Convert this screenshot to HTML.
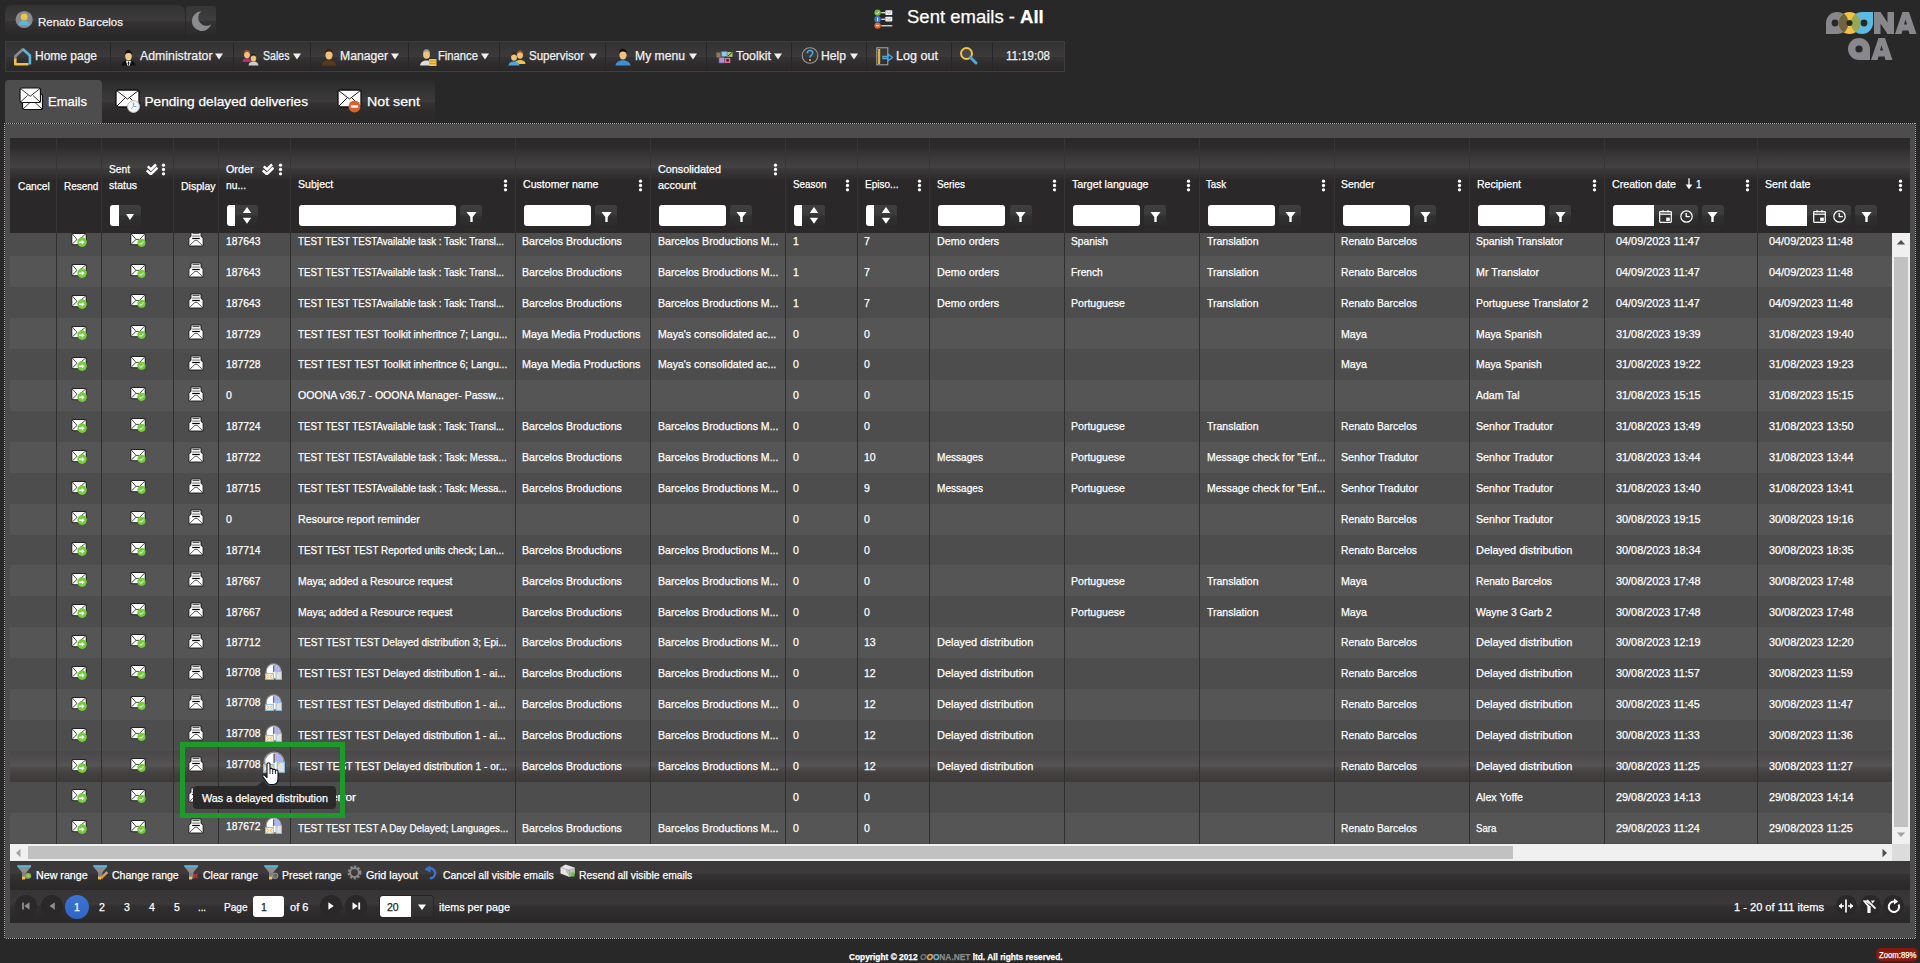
<!DOCTYPE html>
<html><head><meta charset="utf-8"><title>Sent emails</title>
<style>
*{box-sizing:border-box;margin:0;padding:0}
html,body{width:1920px;height:963px;overflow:hidden;background:#282828;font-family:"Liberation Sans",sans-serif;color:#fff;position:relative}
.a{position:absolute}
.t{position:absolute;white-space:nowrap;line-height:1;transform-origin:0 0;-webkit-text-stroke:0.25px currentColor}
svg{display:block;overflow:visible}
</style></head><body>
<svg width="0" height="0" style="position:absolute">
<defs>
<symbol id="kebab" viewBox="0 0 5 13"><circle cx="2.5" cy="2.2" r="1.65" fill="#fff"/><circle cx="2.5" cy="6.5" r="1.65" fill="#fff"/><circle cx="2.5" cy="10.8" r="1.65" fill="#fff"/></symbol>
<symbol id="funnel" viewBox="0 0 12 13"><path d="M0.5 1h11L7.3 6.5V12H4.7V6.5z" fill="#fff"/></symbol>
<symbol id="dchk" viewBox="0 0 12 12"><path d="M1.8 3.4l3.2 3.1 5-5" stroke="#fff" stroke-width="2.5" fill="none"/><path d="M0.8 7.4l4 3.7 6.6-6.4" stroke="#fff" stroke-width="2.6" fill="none"/></symbol>
<symbol id="envres" viewBox="0 0 16 14"><rect x="0.75" y="0.5" width="14.5" height="11.2" rx="1.5" fill="#fff" stroke="#222" stroke-width="1.1"/><path d="M1.3 1L6 6.4M14.5 1.2L9.2 5.6M6 6.4L1.5 10.8" stroke="#333" stroke-width="0.9" fill="none"/><circle cx="11.1" cy="9.1" r="4.8" fill="#74cd3a"/><path d="M8 9.3h4.2" stroke="#fff" stroke-width="1.6"/><path d="M10.8 6.9l2.8 2.4-2.8 2.4z" fill="#fff"/></symbol>
<symbol id="envok" viewBox="0 0 16 14"><rect x="0.75" y="0.5" width="14.5" height="11.2" rx="1.5" fill="#fff" stroke="#222" stroke-width="1.1"/><path d="M1.3 1L6 6.4h3.6L14.5 1.2M6 6.4L1.5 10.8" stroke="#333" stroke-width="0.9" fill="none"/><circle cx="11.5" cy="9.8" r="4.1" fill="#74cd3a"/><path d="M9.5 10.2l1.5 1.1 2.6-2.6" stroke="#dcdcdc" stroke-width="1.2" fill="none"/></symbol>
<symbol id="display" viewBox="0 0 16 16"><path d="M0.9 6.8L3 5.5V1h10v4.5l2.1 1.3V15H0.9z" fill="#fff" stroke="#1a1a1a" stroke-width="0.9"/><path d="M4.5 2.6h7" stroke="#333" stroke-width="0.9"/><path d="M4.2 5.1h7.6" stroke="#888" stroke-width="1.3"/><path d="M4.2 7.5h7.6" stroke="#000" stroke-width="1.2"/><path d="M1.2 14.8L7 9.3h2l5.8 5.5" stroke="#444" stroke-width="0.9" fill="none"/></symbol>
<symbol id="delay" viewBox="0 0 17 17"><circle cx="8.6" cy="8.4" r="8.1" fill="#909090"/><circle cx="8.6" cy="8.4" r="6.8" fill="#fff"/><path d="M8.6 1.6A6.8 6.8 0 0 1 15.4 8.4H8.6z" fill="#b0b2f2"/><path d="M8.6 2.2v7" stroke="#6a6a6a" stroke-width="1.2"/><rect x="11" y="8.6" width="5.6" height="7.8" fill="#e2e2e2" stroke="#86c0e0" stroke-width="0.9"/><circle cx="12.2" cy="9.8" r="0.7" fill="#f2c045"/><rect x="0.5" y="10.4" width="7.9" height="6" fill="#eceef2" stroke="#86c0e0" stroke-width="0.9"/><path d="M1.3 11.2l2.5 2.3M7.6 11.2l-2.5 2.3M1.3 15.8l2.5-2.3M7.6 15.8l-2.5-2.3" stroke="#f0b830" stroke-width="0.9" fill="none"/></symbol>
<symbol id="drop" viewBox="0 0 10 8"><path d="M1 1h8L5 7z" fill="#fff"/></symbol>
<symbol id="spin" viewBox="0 0 10 20"><path d="M0.8 8h8.4L5 2z M0.8 12.7h8.4L5 18.7z" fill="#fff"/></symbol>
<symbol id="cal" viewBox="0 0 13 13"><rect x="0.7" y="1.6" width="11.6" height="10.7" rx="0.5" fill="none" stroke="#fff" stroke-width="1.2"/><path d="M0.7 4.2h11.6" stroke="#fff" stroke-width="1.2"/><circle cx="4" cy="1.3" r="1.1" fill="#fff"/><circle cx="9" cy="1.3" r="1.1" fill="#fff"/><rect x="7.2" y="7.6" width="3.6" height="3.3" fill="#fff"/></symbol>
<symbol id="clock" viewBox="0 0 13 13"><circle cx="6.5" cy="6.5" r="5.7" fill="none" stroke="#fff" stroke-width="1.2"/><path d="M6.2 3v3.6h3.6" stroke="#fff" stroke-width="1.3" fill="none"/></symbol>
<symbol id="tfun" viewBox="0 0 16 15"><rect x="0.3" y="0.2" width="13.8" height="1.8" fill="#5ab8e2"/><path d="M0.6 2h13.2L9.3 7.5V13.5H5.1V7.5z" fill="#8e8e8e"/><path d="M5.1 7.5h4.2V13.5H5.1z" fill="#808080"/><rect x="5" y="11.6" width="3" height="2.9" fill="#f2c045"/></symbol>
<symbol id="pdrop" viewBox="0 0 10 10"><path d="M1 2.5h8L5 8z" fill="#fff"/></symbol>
</defs></svg>

<div class="a" style="left:5px;top:5px;width:180px;height:31px;border-radius:7px;background:linear-gradient(#333232 0%,#3d3b3b 50%,#353333 52%,#2f2d2d 75%,#2a2828 100%)"></div>
<svg class="a" style="left:14.5px;top:10px" width="19" height="19" viewBox="0 0 19 19"><circle cx="9.2" cy="9.5" r="8.6" fill="#8a8a8e"/><circle cx="9.2" cy="7" r="3.5" fill="#f4c040"/><path d="M3.6 15.2C4 12.2 6.2 10.4 9.2 10.4S14.4 12.2 14.8 15.2z" fill="#58b8de"/></svg>
<div class="a" style="left:186px;top:6px;width:30px;height:30px;border-radius:3px;background:linear-gradient(#363636 0%,#3d3d3d 48%,#343434 51%,#2e2e2e 75%,#2a2a2a 100%)"></div>
<svg class="a" style="left:190px;top:10px" width="22" height="22" viewBox="0 0 22 22"><path d="M11.5 1.2A9.9 9.9 0 1 0 21.2 14.2 6.9 6.9 0 0 1 11.5 1.2z" fill="#8c8c90"/></svg>

<div class="t" style="left:38.00px;top:16.97px;font-size:11.5px;color:#f0f0f0;">Renato Barcelos</div>
<svg class="a" style="left:874px;top:8.5px" width="21" height="21" viewBox="0 0 21 21">
<circle cx="3.6" cy="3.6" r="3.2" fill="#72b83a"/><path d="M2.1 3.7l1.1 1.1 2-2.1" stroke="#fff" stroke-width="0.9" fill="none"/>
<circle cx="3.6" cy="10.2" r="3.2" fill="#3f79d1"/><rect x="3.2" y="8.5" width="0.9" height="3.6" fill="#fff"/>
<circle cx="3.6" cy="16.6" r="3.2" fill="#dc6a34"/><rect x="2" y="16.1" width="3.2" height="1" fill="#fff"/>
<rect x="7.3" y="3" width="3.8" height="1.3" fill="#ddd"/><rect x="11.3" y="1.2" width="7" height="4.8" rx="0.8" fill="#eee"/><path d="M12.5 2.5l2.5 2 2.3-2" stroke="#888" stroke-width="0.6" fill="none"/>
<rect x="7.3" y="9.6" width="3.8" height="1.3" fill="#ddd"/><rect x="11.3" y="7.8" width="7" height="4.8" rx="0.8" fill="#eee"/><path d="M12.5 9.1l2.5 2 2.3-2" stroke="#888" stroke-width="0.6" fill="none"/>
<rect x="7.3" y="16.1" width="11" height="1.3" fill="#ddd"/></svg>

<div class="t" style="left:907.00px;top:7.84px;font-size:18.5px;color:#fff;">Sent emails - <b>All</b></div>
<svg class="a" style="left:1824px;top:10px" width="94" height="52" viewBox="0 0 94 52">
<path d="M2 24 V13 A11 11 0 0 1 13 2 A11 11 0 0 1 24 13 A11 11 0 0 1 13 24z" fill="#88888c"/>
<path d="M14.5 13 A11 11 0 0 1 25.5 2 A11 11 0 0 1 36.5 13 A11 11 0 0 1 25.5 24 A11 11 0 0 1 14.5 13z" fill="#f3c244"/>
<path d="M14.5 13 A11 11 0 0 1 20 3.5 A11 11 0 0 1 24 13 A11 11 0 0 1 20 22.5 A11 11 0 0 1 14.5 13z" fill="#6e6540"/>
<path d="M27 13 A11 11 0 0 1 38 2 H49 V13 A11 11 0 0 1 38 24 A11 11 0 0 1 27 13z" fill="#5bbbe2"/>
<path d="M27 13 A11 11 0 0 1 31.8 3.9 A11 11 0 0 1 36.5 13 A11 11 0 0 1 31.8 22.1 A11 11 0 0 1 27 13z" fill="#98a850"/>
<circle cx="11" cy="13" r="3.4" fill="#282828"/><circle cx="25.5" cy="13" r="3" fill="#282828"/><circle cx="40" cy="13" r="3.4" fill="#282828"/>
<path d="M50 24V2h6.5l7 10.5V2h6.5v22h-6.5l-7-10.5V24z" fill="#88888c"/>
<path d="M71 24l7.5-22h6.5l7.5 22h-7l-1-3.5h-6l-1 3.5zM80 14.5h3l-1.5-5z" fill="#88888c" fill-rule="evenodd"/>
<path d="M24 39 A11 11 0 0 1 35 28 A11 11 0 0 1 46 39 V50 H35 A11 11 0 0 1 24 39z" fill="#88888c"/>
<circle cx="35" cy="39" r="3.6" fill="#282828"/>
<path d="M47 50l7.5-22h6.5l7.5 22h-7l-1-3.5h-6l-1 3.5zM56 40.5h3l-1.5-5z" fill="#88888c" fill-rule="evenodd"/>
</svg>

<div class="a" style="left:5px;top:41px;width:1060px;height:31px;border:1px solid #3e3e3e;background:linear-gradient(#333232 0%,#3c3a3a 50%,#353333 53%,#2e2c2c 75%,#292727 100%)"></div>
<div class="a" style="left:110px;top:42px;width:1px;height:29px;background:#262626"></div>
<div class="a" style="left:233px;top:42px;width:1px;height:29px;background:#262626"></div>
<div class="a" style="left:310px;top:42px;width:1px;height:29px;background:#262626"></div>
<div class="a" style="left:408px;top:42px;width:1px;height:29px;background:#262626"></div>
<div class="a" style="left:499px;top:42px;width:1px;height:29px;background:#262626"></div>
<div class="a" style="left:605px;top:42px;width:1px;height:29px;background:#262626"></div>
<div class="a" style="left:706px;top:42px;width:1px;height:29px;background:#262626"></div>
<div class="a" style="left:791px;top:42px;width:1px;height:29px;background:#262626"></div>
<div class="a" style="left:866px;top:42px;width:1px;height:29px;background:#262626"></div>
<div class="a" style="left:951px;top:42px;width:1px;height:29px;background:#262626"></div>
<div class="a" style="left:992px;top:42px;width:1px;height:29px;background:#262626"></div>
<div class="t" style="left:35.00px;top:49.84px;font-size:12px;color:#f0f0f0;">Home page</div>
<div class="t" style="left:140.00px;top:49.84px;font-size:12px;color:#f0f0f0;transform:scaleX(1.0256);">Administrator</div>
<svg class="a" style="left:215px;top:52.8px" width="8" height="7" viewBox="0 0 8 7"><path d="M0 0.5h8L4 6.5z" fill="#f0f0f0"/></svg>
<div class="t" style="left:262.50px;top:49.84px;font-size:12px;color:#f0f0f0;transform:scaleX(0.8824);">Sales</div>
<svg class="a" style="left:293px;top:52.8px" width="8" height="7" viewBox="0 0 8 7"><path d="M0 0.5h8L4 6.5z" fill="#f0f0f0"/></svg>
<div class="t" style="left:340.00px;top:49.84px;font-size:12px;color:#f0f0f0;transform:scaleX(1.0132);">Manager</div>
<svg class="a" style="left:391px;top:52.8px" width="8" height="7" viewBox="0 0 8 7"><path d="M0 0.5h8L4 6.5z" fill="#f0f0f0"/></svg>
<div class="t" style="left:438.00px;top:49.84px;font-size:12px;color:#f0f0f0;transform:scaleX(0.9367);">Finance</div>
<svg class="a" style="left:481px;top:52.8px" width="8" height="7" viewBox="0 0 8 7"><path d="M0 0.5h8L4 6.5z" fill="#f0f0f0"/></svg>
<div class="t" style="left:529.00px;top:49.84px;font-size:12px;color:#f0f0f0;transform:scaleX(0.9589);">Supervisor</div>
<svg class="a" style="left:589px;top:52.8px" width="8" height="7" viewBox="0 0 8 7"><path d="M0 0.5h8L4 6.5z" fill="#f0f0f0"/></svg>
<div class="t" style="left:635.00px;top:49.84px;font-size:12px;color:#f0f0f0;transform:scaleX(1.0130);">My menu</div>
<svg class="a" style="left:689px;top:52.8px" width="8" height="7" viewBox="0 0 8 7"><path d="M0 0.5h8L4 6.5z" fill="#f0f0f0"/></svg>
<div class="t" style="left:736.00px;top:49.84px;font-size:12px;color:#f0f0f0;transform:scaleX(1.0289);">Toolkit</div>
<svg class="a" style="left:774px;top:52.8px" width="8" height="7" viewBox="0 0 8 7"><path d="M0 0.5h8L4 6.5z" fill="#f0f0f0"/></svg>
<div class="t" style="left:821.00px;top:49.84px;font-size:12px;color:#f0f0f0;transform:scaleX(1.0127);">Help</div>
<svg class="a" style="left:850px;top:52.8px" width="8" height="7" viewBox="0 0 8 7"><path d="M0 0.5h8L4 6.5z" fill="#f0f0f0"/></svg>
<div class="t" style="left:896.00px;top:49.84px;font-size:12px;color:#f0f0f0;transform:scaleX(1.0488);">Log out</div>
<div class="t" style="left:1006.00px;top:49.84px;font-size:12px;color:#f0f0f0;transform:scaleX(0.9601);">11:19:08</div>
<svg class="a" style="left:14px;top:48px" width="18" height="18" viewBox="0 0 18 18"><path d="M1.3 11V8.2L9 1.3" fill="none" stroke="#8a8a8e" stroke-width="2.6" stroke-linejoin="round" stroke-linecap="round"/><path d="M9 1.3L15.9 7.5V16.6" fill="none" stroke="#58b8e2" stroke-width="2.6" stroke-linejoin="round"/><path d="M1.3 10.8V16.2H14.5" fill="none" stroke="#f4c242" stroke-width="2.6" stroke-linejoin="round"/></svg>

<svg class="a" style="left:120.5px;top:48.5px" width="15" height="17" viewBox="0 0 15 17"><path d="M0.3 16.5C0.8 13.5 2.5 12.3 5 11.8h5c2.5 0.5 4.2 1.7 4.7 4.7z" fill="#111"/><path d="M5 11.8h5L8.7 16.5H6.3z" fill="#fff"/><path d="M7 12.5h1l0.4 2.5-0.9 1.2-0.9-1.2z" fill="#111"/><ellipse cx="7.5" cy="7" rx="3.3" ry="4.3" fill="#f3c98a"/><path d="M4 6.3C3.8 2.5 5.5 1 7.5 1s3.7 1.5 3.5 5.3C10.5 4.5 9.2 3.8 7.5 3.9 5.8 3.8 4.5 4.5 4 6.3z" fill="#111"/></svg>
<svg class="a" style="left:242px;top:48px" width="18" height="18" viewBox="0 0 18 18"><path d="M0.5 14c0.3-3 2-4 4.5-4s4.2 1 4.5 4z" fill="#b0336a"/><ellipse cx="5" cy="6.5" rx="3" ry="3.7" fill="#f0c27a"/><path d="M1.8 7C1.5 3 3 2 5 2s3.5 1 3.2 5C7.5 4.5 6 4 5 4S2.5 4.5 1.8 7z" fill="#a0522d"/><path d="M6.5 17.5c0.3-3 2.2-4 5-4s4.7 1 5 4z" fill="#ccc"/><ellipse cx="11.5" cy="10" rx="2.8" ry="3.5" fill="#f0c27a"/><path d="M8.7 9.5C8.7 7 10 6 11.5 6s2.8 1 2.8 3.5c-0.7-1.5-1.7-2-2.8-2s-2.1 0.5-2.8 2z" fill="#111"/></svg>
<svg class="a" style="left:321px;top:47px" width="16" height="19" viewBox="0 0 16 19"><path d="M0.5 18.5c0.5-3.5 3-5 7.5-5s7 1.5 7.5 5z" fill="#5a3a1a"/><path d="M6 13.5h4l-2 5z" fill="#5a3a1a"/><ellipse cx="8" cy="8" rx="3.6" ry="4.6" fill="#f0c27a"/><path d="M4.3 7C4.2 3 6 1.8 8 1.8s3.8 1.2 3.7 5.2C11 5 9.5 4.3 8 4.5 6.5 4.3 5 5 4.3 7z" fill="#3a2410"/></svg>
<svg class="a" style="left:419px;top:47px" width="18" height="20" viewBox="0 0 18 20"><path d="M1 18.5c0.5-3.5 3-5 6.5-5s6 1.5 6.5 5z" fill="#ddd"/><ellipse cx="7.5" cy="7.5" rx="3.4" ry="4.3" fill="#f0c27a"/><path d="M4 7C4 3.5 5.5 2.3 7.5 2.3S11 3.5 11 7C10.3 5 9 4.5 7.5 4.5S4.7 5 4 7z" fill="#999"/><rect x="10" y="12" width="7.5" height="7" fill="#f2c045"/><path d="M10 14h7.5M10 16.5h7.5" stroke="#c09020" stroke-width="0.7"/></svg>
<svg class="a" style="left:508px;top:48px" width="19" height="18" viewBox="0 0 19 18"><path d="M6.5 16c0.3-3 2.2-4 5.5-4s5.2 1 5.5 4z" fill="#f2c045"/><ellipse cx="12" cy="7" rx="3" ry="3.7" fill="#f0c27a"/><path d="M9 6.5C9 3.5 10.5 2.3 12 2.3S15 3.5 15 6.5c-0.7-1.5-2-2-3-2s-2.3 0.5-3 2z" fill="#a0522d"/><path d="M0.5 17.5c0.3-3 2.2-4 5.5-4s5.2 1 5.5 4z" fill="#4aa8de"/><ellipse cx="6" cy="9" rx="3" ry="3.7" fill="#f0c27a"/><path d="M3 8.5C3 5.5 4.5 4.3 6 4.3S9 5.5 9 8.5c-0.7-1.5-2-2-3-2s-2.3 0.5-3 2z" fill="#3a2410"/></svg>
<svg class="a" style="left:615px;top:47px" width="16" height="19" viewBox="0 0 16 19"><path d="M0.5 18.5c0.5-3.5 3-5 7.5-5s7 1.5 7.5 5z" fill="#3c8fd4"/><path d="M6 13.5h4l-2 5z" fill="#3c8fd4"/><ellipse cx="8" cy="8" rx="3.6" ry="4.6" fill="#f0c27a"/><path d="M4.3 7C4.2 3 6 1.8 8 1.8s3.8 1.2 3.7 5.2C11 5 9.5 4.3 8 4.5 6.5 4.3 5 5 4.3 7z" fill="#111"/></svg>
<svg class="a" style="left:715.5px;top:50.5px" width="17" height="13" viewBox="0 0 17 13"><rect x="0.3" y="1.5" width="4.5" height="5" fill="#a07850" stroke="#555" stroke-width="0.5"/><rect x="5.5" y="0.5" width="5.5" height="5" fill="#8cc8e8" stroke="#4a7a9a" stroke-width="0.6"/><rect x="11.3" y="1" width="5.2" height="4.8" fill="#a8c878"/><path d="M12 5l4-3.5" stroke="#333" stroke-width="1"/><rect x="3" y="6.5" width="5.5" height="5.5" fill="#b090d0" stroke="#6a5a8a" stroke-width="0.6"/><rect x="8.8" y="7" width="5.5" height="5" fill="#e07090"/><rect x="10.3" y="8.3" width="2.5" height="2.2" fill="#222"/></svg>
<svg class="a" style="left:801px;top:46px" width="18" height="19" viewBox="0 0 18 19"><circle cx="9" cy="9.5" r="7.8" fill="none" stroke="#9a9a9a" stroke-width="1.1"/><path d="M6.3 7.2C6.3 5.5 7.5 4.5 9 4.5s2.7 1 2.7 2.5c0 2-2.7 2.3-2.7 4.5" fill="none" stroke="#4aa8de" stroke-width="1.6"/><circle cx="9" cy="14" r="1" fill="#f2c045"/></svg>
<svg class="a" style="left:876px;top:47px" width="18" height="19" viewBox="0 0 18 19"><rect x="0.8" y="0.8" width="11" height="17" fill="none" stroke="#aaa" stroke-width="1"/><rect x="2" y="2" width="2.2" height="15" fill="#e0b040"/><path d="M7 9.5h5V7l4.5 3.5-4.5 3.5v-2.5H7z" fill="none" stroke="#4aa8de" stroke-width="1.3"/></svg>
<svg class="a" style="left:959px;top:46px" width="19" height="19" viewBox="0 0 19 19"><circle cx="7.5" cy="7.5" r="5.5" fill="#4a4a4a" stroke="#f2c045" stroke-width="2"/><path d="M11.5 11.5l5.5 5.5" stroke="#4aa8de" stroke-width="3" stroke-linecap="round"/></svg>
<div class="a" style="left:5px;top:80px;width:430px;height:43px;border-radius:0 4px 0 0;background:linear-gradient(#2b2b2b 0%,#333232 20%,#3c3a3a 50%,#353333 52%,#2d2b2b 72%,#2a2828 100%)"></div>
<div class="a" style="left:5px;top:80px;width:97px;height:44px;border-radius:4px 4px 0 0;background:#4d4d4d"></div>
<svg class="a" style="left:19px;top:87px" width="26" height="24" viewBox="0 0 26 24"><rect x="3.5" y="7" width="20" height="15.5" rx="2" fill="#fff" stroke="#111" stroke-width="1.2"/><path d="M4 22L11 15.5M23 22L16 15.5" stroke="#222" stroke-width="0.9" fill="none"/><rect x="1" y="1" width="20.5" height="14.5" rx="2" fill="#fff" stroke="#111" stroke-width="1.2"/><path d="M1.5 1.5L11.2 9.3 21 1.5M1.5 15L8.5 8.5M21 15L14 8.5" stroke="#222" stroke-width="0.9" fill="none"/></svg>
<svg class="a" style="left:115px;top:89px" width="27" height="24" viewBox="0 0 27 24"><rect x="1" y="1" width="23" height="17" rx="2" fill="#fff" stroke="#111" stroke-width="1.3"/><path d="M1.5 1.5L12.5 10 23.5 1.5M1.5 17.5L10 9M23.5 17.5L15 9" stroke="#222" stroke-width="1" fill="none"/><circle cx="18.5" cy="17.5" r="6" fill="#f4f4f4" stroke="#bbb" stroke-width="1"/><path d="M18.5 13.5v4h3" stroke="#6ab0e0" stroke-width="1.2" fill="none"/><path d="M18.5 17.5l-2.5 2.5" stroke="#f2c045" stroke-width="1"/></svg>
<svg class="a" style="left:337px;top:89px" width="26" height="24" viewBox="0 0 26 24"><rect x="1" y="1" width="23" height="17" rx="2" fill="#fff" stroke="#111" stroke-width="1.3"/><path d="M1.5 1.5L12.5 10 23.5 1.5M1.5 17.5L10 9M23.5 17.5L15 9" stroke="#222" stroke-width="1" fill="none"/><circle cx="17.5" cy="17.5" r="6" fill="#d9602e"/><rect x="13.8" y="16.3" width="7.4" height="2.4" fill="#fff"/></svg>

<div class="t" style="left:48.00px;top:95.27px;font-size:13.5px;color:#fff;transform:scaleX(0.9626);">Emails</div>
<div class="t" style="left:144.40px;top:95.10px;font-size:13.7px;color:#fff;">Pending delayed deliveries</div>
<div class="t" style="left:366.60px;top:95.10px;font-size:13.7px;color:#fff;transform:scaleX(1.0395);">Not sent</div>
<div class="a" style="left:4px;top:123px;width:1912px;height:816px;background:#4d4d4d"></div>
<div class="a" style="left:4px;top:123px;width:1912px;height:1px;background:repeating-linear-gradient(90deg,#a8a8a8 0 1px,#262626 1px 2px)"></div>
<div class="a" style="left:4px;top:938px;width:1912px;height:1px;background:repeating-linear-gradient(90deg,#a8a8a8 0 1px,#262626 1px 2px)"></div>
<div class="a" style="left:4px;top:123px;width:1px;height:816px;background:repeating-linear-gradient(180deg,#a8a8a8 0 1px,#262626 1px 2px)"></div>
<div class="a" style="left:1915px;top:123px;width:1px;height:816px;background:repeating-linear-gradient(180deg,#a8a8a8 0 1px,#262626 1px 2px)"></div>
<div class="a" style="left:10px;top:138px;width:1899.7px;height:94.5px;background:#2a2828"></div>
<div class="a" style="left:10px;top:138px;width:1899.7px;height:30px;background:linear-gradient(#2a2828 0%,#2c2a2a 28%,#3b3939 65%,#444242 100%)"></div>
<div class="a" style="left:10px;top:168px;width:1899.7px;height:13px;background:linear-gradient(#3d3b3b,#2a2828)"></div>
<div class="a" style="left:56px;top:138px;width:1px;height:94.5px;background:#363434"></div>
<div class="a" style="left:101px;top:138px;width:1px;height:94.5px;background:#363434"></div>
<div class="a" style="left:173px;top:138px;width:1px;height:94.5px;background:#363434"></div>
<div class="a" style="left:218px;top:138px;width:1px;height:94.5px;background:#363434"></div>
<div class="a" style="left:290px;top:138px;width:1px;height:94.5px;background:#363434"></div>
<div class="a" style="left:515px;top:138px;width:1px;height:94.5px;background:#363434"></div>
<div class="a" style="left:650px;top:138px;width:1px;height:94.5px;background:#363434"></div>
<div class="a" style="left:785px;top:138px;width:1px;height:94.5px;background:#363434"></div>
<div class="a" style="left:857px;top:138px;width:1px;height:94.5px;background:#363434"></div>
<div class="a" style="left:929px;top:138px;width:1px;height:94.5px;background:#363434"></div>
<div class="a" style="left:1064px;top:138px;width:1px;height:94.5px;background:#363434"></div>
<div class="a" style="left:1199px;top:138px;width:1px;height:94.5px;background:#363434"></div>
<div class="a" style="left:1334px;top:138px;width:1px;height:94.5px;background:#363434"></div>
<div class="a" style="left:1469px;top:138px;width:1px;height:94.5px;background:#363434"></div>
<div class="a" style="left:1604px;top:138px;width:1px;height:94.5px;background:#363434"></div>
<div class="a" style="left:1757px;top:138px;width:1px;height:94.5px;background:#363434"></div>
<div class="t" style="left:17.50px;top:180.69px;font-size:11px;color:#fff;transform:scaleX(0.9285);">Cancel</div>
<div class="t" style="left:63.60px;top:180.69px;font-size:11px;color:#fff;transform:scaleX(0.9071);">Resend</div>
<div class="t" style="left:109.00px;top:163.79px;font-size:11px;color:#fff;transform:scaleX(0.9275);">Sent</div>
<div class="t" style="left:109.00px;top:179.69px;font-size:11px;color:#fff;transform:scaleX(0.9537);">status</div>
<div class="t" style="left:180.70px;top:180.69px;font-size:11px;color:#fff;transform:scaleX(0.9563);">Display</div>
<div class="t" style="left:225.70px;top:163.79px;font-size:11px;color:#fff;transform:scaleX(0.9778);">Order</div>
<div class="t" style="left:225.70px;top:179.69px;font-size:11px;color:#fff;transform:scaleX(0.9343);">nu...</div>
<div class="t" style="left:297.50px;top:178.69px;font-size:11px;color:#fff;transform:scaleX(0.9618);">Subject</div>
<div class="t" style="left:522.50px;top:178.69px;font-size:11px;color:#fff;transform:scaleX(0.9647);">Customer name</div>
<div class="t" style="left:657.50px;top:163.69px;font-size:11px;color:#fff;transform:scaleX(0.9810);">Consolidated</div>
<div class="t" style="left:657.50px;top:180.29px;font-size:11px;color:#fff;transform:scaleX(0.9862);">account</div>
<div class="t" style="left:792.50px;top:178.69px;font-size:11px;color:#fff;transform:scaleX(0.8978);">Season</div>
<div class="t" style="left:864.50px;top:178.69px;font-size:11px;color:#fff;transform:scaleX(0.9131);">Episo...</div>
<div class="t" style="left:936.50px;top:178.69px;font-size:11px;color:#fff;transform:scaleX(0.8978);">Series</div>
<div class="t" style="left:1071.50px;top:178.69px;font-size:11px;color:#fff;transform:scaleX(0.9695);">Target language</div>
<div class="t" style="left:1206.00px;top:178.69px;font-size:11px;color:#fff;transform:scaleX(0.8840);">Task</div>
<div class="t" style="left:1341.30px;top:178.69px;font-size:11px;color:#fff;transform:scaleX(0.9441);">Sender</div>
<div class="t" style="left:1476.50px;top:178.69px;font-size:11px;color:#fff;transform:scaleX(0.9595);">Recipient</div>
<div class="t" style="left:1611.50px;top:178.69px;font-size:11px;color:#fff;transform:scaleX(0.9690);">Creation date</div>
<div class="t" style="left:1764.50px;top:178.69px;font-size:11px;color:#fff;transform:scaleX(0.9662);">Sent date</div>
<svg class="a" style="left:1685px;top:177.5px" width="8" height="12" viewBox="0 0 8 12"><path d="M4 0.3v7" stroke="#fff" stroke-width="1.3"/><path d="M0.6 6.5h6.8L4 11.2z" fill="#fff"/></svg>
<div class="t" style="left:1696.00px;top:178.69px;font-size:11px;color:#fff;transform:scaleX(0.8980);">1</div>
<svg class="a" style="left:146px;top:163px" width="12" height="12"><use href="#dchk"/></svg>
<svg class="a" style="left:262px;top:163px" width="12" height="12"><use href="#dchk"/></svg>
<svg class="a" style="left:160.6px;top:162.9px" width="5" height="13"><use href="#kebab"/></svg>
<svg class="a" style="left:277.9px;top:162.9px" width="5" height="13"><use href="#kebab"/></svg>
<svg class="a" style="left:502.5px;top:179.0px" width="5" height="13"><use href="#kebab"/></svg>
<svg class="a" style="left:637.9px;top:179.0px" width="5" height="13"><use href="#kebab"/></svg>
<svg class="a" style="left:772.9px;top:162.9px" width="5" height="13"><use href="#kebab"/></svg>
<svg class="a" style="left:844.5px;top:179.0px" width="5" height="13"><use href="#kebab"/></svg>
<svg class="a" style="left:916.5px;top:179.0px" width="5" height="13"><use href="#kebab"/></svg>
<svg class="a" style="left:1051.5px;top:179.0px" width="5" height="13"><use href="#kebab"/></svg>
<svg class="a" style="left:1186.2px;top:179.0px" width="5" height="13"><use href="#kebab"/></svg>
<svg class="a" style="left:1321.2px;top:179.0px" width="5" height="13"><use href="#kebab"/></svg>
<svg class="a" style="left:1456.5px;top:179.0px" width="5" height="13"><use href="#kebab"/></svg>
<svg class="a" style="left:1591.5px;top:179.0px" width="5" height="13"><use href="#kebab"/></svg>
<svg class="a" style="left:1744.7px;top:179.0px" width="5" height="13"><use href="#kebab"/></svg>
<svg class="a" style="left:1897.8px;top:179.0px" width="5" height="13"><use href="#kebab"/></svg>
<div class="a" style="left:110px;top:205px;width:31.0px;height:21px;border-radius:3px;background:linear-gradient(#3f3f3f 0%,#3b3b3b 45%,#303030 55%,#2b2b2b 100%)"><svg style="position:absolute;left:15.3px;top:8px" width="10" height="8"><use href="#drop"/></svg></div>
<div class="a" style="left:110px;top:205px;width:9.0px;height:21px;border-radius:3px 0 0 3px;background:#fff"></div>
<div class="a" style="left:227px;top:205px;width:31.0px;height:21px;border-radius:3px;background:linear-gradient(#3f3f3f 0%,#3b3b3b 45%,#303030 55%,#2b2b2b 100%)"><svg style="position:absolute;left:14.8px;top:0px" width="10" height="20"><use href="#spin"/></svg></div>
<div class="a" style="left:227px;top:205px;width:8.0px;height:21px;border-radius:3px 0 0 3px;background:#fff"></div>
<div class="a" style="left:794px;top:205px;width:30.6px;height:21px;border-radius:3px;background:linear-gradient(#3f3f3f 0%,#3b3b3b 45%,#303030 55%,#2b2b2b 100%)"><svg style="position:absolute;left:14.8px;top:0px" width="10" height="20"><use href="#spin"/></svg></div>
<div class="a" style="left:794px;top:205px;width:8.0px;height:21px;border-radius:3px 0 0 3px;background:#fff"></div>
<div class="a" style="left:866px;top:205px;width:30.6px;height:21px;border-radius:3px;background:linear-gradient(#3f3f3f 0%,#3b3b3b 45%,#303030 55%,#2b2b2b 100%)"><svg style="position:absolute;left:14.8px;top:0px" width="10" height="20"><use href="#spin"/></svg></div>
<div class="a" style="left:866px;top:205px;width:8.0px;height:21px;border-radius:3px 0 0 3px;background:#fff"></div>
<div class="a" style="left:299px;top:205px;width:157.0px;height:21px;border-radius:3px;background:#fff"></div>
<div class="a" style="left:460px;top:205px;width:22.0px;height:21px;border-radius:3px;background:linear-gradient(#3f3f3f 0%,#3b3b3b 45%,#303030 55%,#2b2b2b 100%)"><svg style="position:absolute;left:5.5px;top:5.5px" width="11" height="12"><use href="#funnel"/></svg></div>
<div class="a" style="left:524px;top:205px;width:67.0px;height:21px;border-radius:3px;background:#fff"></div>
<div class="a" style="left:595px;top:205px;width:22.0px;height:21px;border-radius:3px;background:linear-gradient(#3f3f3f 0%,#3b3b3b 45%,#303030 55%,#2b2b2b 100%)"><svg style="position:absolute;left:5.5px;top:5.5px" width="11" height="12"><use href="#funnel"/></svg></div>
<div class="a" style="left:659px;top:205px;width:67.3px;height:21px;border-radius:3px;background:#fff"></div>
<div class="a" style="left:730px;top:205px;width:22.0px;height:21px;border-radius:3px;background:linear-gradient(#3f3f3f 0%,#3b3b3b 45%,#303030 55%,#2b2b2b 100%)"><svg style="position:absolute;left:5.5px;top:5.5px" width="11" height="12"><use href="#funnel"/></svg></div>
<div class="a" style="left:938px;top:205px;width:66.5px;height:21px;border-radius:3px;background:#fff"></div>
<div class="a" style="left:1009.5px;top:205px;width:22.0px;height:21px;border-radius:3px;background:linear-gradient(#3f3f3f 0%,#3b3b3b 45%,#303030 55%,#2b2b2b 100%)"><svg style="position:absolute;left:5.5px;top:5.5px" width="11" height="12"><use href="#funnel"/></svg></div>
<div class="a" style="left:1073px;top:205px;width:66.5px;height:21px;border-radius:3px;background:#fff"></div>
<div class="a" style="left:1144px;top:205px;width:22.0px;height:21px;border-radius:3px;background:linear-gradient(#3f3f3f 0%,#3b3b3b 45%,#303030 55%,#2b2b2b 100%)"><svg style="position:absolute;left:5.5px;top:5.5px" width="11" height="12"><use href="#funnel"/></svg></div>
<div class="a" style="left:1208px;top:205px;width:67.0px;height:21px;border-radius:3px;background:#fff"></div>
<div class="a" style="left:1279px;top:205px;width:22.0px;height:21px;border-radius:3px;background:linear-gradient(#3f3f3f 0%,#3b3b3b 45%,#303030 55%,#2b2b2b 100%)"><svg style="position:absolute;left:5.5px;top:5.5px" width="11" height="12"><use href="#funnel"/></svg></div>
<div class="a" style="left:1342.5px;top:205px;width:67.5px;height:21px;border-radius:3px;background:#fff"></div>
<div class="a" style="left:1414.4px;top:205px;width:22.0px;height:21px;border-radius:3px;background:linear-gradient(#3f3f3f 0%,#3b3b3b 45%,#303030 55%,#2b2b2b 100%)"><svg style="position:absolute;left:5.5px;top:5.5px" width="11" height="12"><use href="#funnel"/></svg></div>
<div class="a" style="left:1477.8px;top:205px;width:67.2px;height:21px;border-radius:3px;background:#fff"></div>
<div class="a" style="left:1549px;top:205px;width:22.0px;height:21px;border-radius:3px;background:linear-gradient(#3f3f3f 0%,#3b3b3b 45%,#303030 55%,#2b2b2b 100%)"><svg style="position:absolute;left:5.5px;top:5.5px" width="11" height="12"><use href="#funnel"/></svg></div>
<div class="a" style="left:1653.8px;top:205px;width:44.0px;height:21px;border-radius:0 3px 3px 0;background:linear-gradient(#3f3f3f 0%,#3b3b3b 45%,#303030 55%,#2b2b2b 100%)"><svg style="position:absolute;left:5.5px;top:5px" width="13" height="13"><use href="#cal"/></svg><svg style="position:absolute;left:26.3px;top:5.2px" width="13" height="13"><use href="#clock"/></svg></div>
<div class="a" style="left:1612.8px;top:205px;width:41.0px;height:21px;border-radius:3px 0 0 3px;background:#fff"></div>
<div class="a" style="left:1701.5px;top:205px;width:22.0px;height:21px;border-radius:3px;background:linear-gradient(#3f3f3f 0%,#3b3b3b 45%,#303030 55%,#2b2b2b 100%)"><svg style="position:absolute;left:5.5px;top:5.5px" width="11" height="12"><use href="#funnel"/></svg></div>
<div class="a" style="left:1807px;top:205px;width:43.6px;height:21px;border-radius:0 3px 3px 0;background:linear-gradient(#3f3f3f 0%,#3b3b3b 45%,#303030 55%,#2b2b2b 100%)"><svg style="position:absolute;left:5.5px;top:5px" width="13" height="13"><use href="#cal"/></svg><svg style="position:absolute;left:26.3px;top:5.2px" width="13" height="13"><use href="#clock"/></svg></div>
<div class="a" style="left:1766px;top:205px;width:41.0px;height:21px;border-radius:3px 0 0 3px;background:#fff"></div>
<div class="a" style="left:1855px;top:205px;width:22.0px;height:21px;border-radius:3px;background:linear-gradient(#3f3f3f 0%,#3b3b3b 45%,#303030 55%,#2b2b2b 100%)"><svg style="position:absolute;left:5.5px;top:5.5px" width="11" height="12"><use href="#funnel"/></svg></div>
<div class="a" style="left:10px;top:232.5px;width:1882px;height:611.0px;overflow:hidden;background:#4d4d4d">
</div>
<div class="a" style="left:0;top:232.5px;width:1892px;height:611.0px;overflow:hidden">
<div class="a" style="left:0;top:-232.5px;width:1920px;height:963px">
<div class="a" style="left:10px;top:225.60px;width:1882px;height:30.94px;background:#4d4d4d"></div>
<div class="a" style="left:10px;top:256.49px;width:1882px;height:30.94px;background:#555555"></div>
<div class="a" style="left:10px;top:287.38px;width:1882px;height:30.94px;background:#4d4d4d"></div>
<div class="a" style="left:10px;top:318.27px;width:1882px;height:30.94px;background:#555555"></div>
<div class="a" style="left:10px;top:349.16px;width:1882px;height:30.94px;background:#4d4d4d"></div>
<div class="a" style="left:10px;top:380.05px;width:1882px;height:30.94px;background:#555555"></div>
<div class="a" style="left:10px;top:410.94px;width:1882px;height:30.94px;background:#4d4d4d"></div>
<div class="a" style="left:10px;top:441.83px;width:1882px;height:30.94px;background:#555555"></div>
<div class="a" style="left:10px;top:472.72px;width:1882px;height:30.94px;background:#4d4d4d"></div>
<div class="a" style="left:10px;top:503.61px;width:1882px;height:30.94px;background:#555555"></div>
<div class="a" style="left:10px;top:534.50px;width:1882px;height:30.94px;background:#4d4d4d"></div>
<div class="a" style="left:10px;top:565.39px;width:1882px;height:30.94px;background:#555555"></div>
<div class="a" style="left:10px;top:596.28px;width:1882px;height:30.94px;background:#4d4d4d"></div>
<div class="a" style="left:10px;top:627.17px;width:1882px;height:30.94px;background:#555555"></div>
<div class="a" style="left:10px;top:658.06px;width:1882px;height:30.94px;background:#4d4d4d"></div>
<div class="a" style="left:10px;top:688.95px;width:1882px;height:30.94px;background:#555555"></div>
<div class="a" style="left:10px;top:719.84px;width:1882px;height:30.94px;background:#4d4d4d"></div>
<div class="a" style="left:10px;top:750.73px;width:1882px;height:30.94px;background:linear-gradient(#494747 0%,#4f4d4d 25%,#555353 47%,#4b4949 55%,#433f3f 75%,#3d3b3b 100%)"></div>
<div class="a" style="left:10px;top:781.62px;width:1882px;height:30.94px;background:#4d4d4d"></div>
<div class="a" style="left:10px;top:812.51px;width:1882px;height:30.94px;background:#555555"></div>
<div class="a" style="left:56px;top:232.5px;width:1px;height:611.0px;background:#2f2f2f"></div>
<div class="a" style="left:101px;top:232.5px;width:1px;height:611.0px;background:#2f2f2f"></div>
<div class="a" style="left:173px;top:232.5px;width:1px;height:611.0px;background:#2f2f2f"></div>
<div class="a" style="left:218px;top:232.5px;width:1px;height:611.0px;background:#2f2f2f"></div>
<div class="a" style="left:290px;top:232.5px;width:1px;height:611.0px;background:#2f2f2f"></div>
<div class="a" style="left:515px;top:232.5px;width:1px;height:611.0px;background:#2f2f2f"></div>
<div class="a" style="left:650px;top:232.5px;width:1px;height:611.0px;background:#2f2f2f"></div>
<div class="a" style="left:785px;top:232.5px;width:1px;height:611.0px;background:#2f2f2f"></div>
<div class="a" style="left:857px;top:232.5px;width:1px;height:611.0px;background:#2f2f2f"></div>
<div class="a" style="left:929px;top:232.5px;width:1px;height:611.0px;background:#2f2f2f"></div>
<div class="a" style="left:1064px;top:232.5px;width:1px;height:611.0px;background:#2f2f2f"></div>
<div class="a" style="left:1199px;top:232.5px;width:1px;height:611.0px;background:#2f2f2f"></div>
<div class="a" style="left:1334px;top:232.5px;width:1px;height:611.0px;background:#2f2f2f"></div>
<div class="a" style="left:1469px;top:232.5px;width:1px;height:611.0px;background:#2f2f2f"></div>
<div class="a" style="left:1604px;top:232.5px;width:1px;height:611.0px;background:#2f2f2f"></div>
<div class="a" style="left:1757px;top:232.5px;width:1px;height:611.0px;background:#2f2f2f"></div>
<svg class="a" style="left:71px;top:233.40px" width="16" height="14"><use href="#envres"/></svg>
<svg class="a" style="left:130.2px;top:232.70px" width="16" height="14"><use href="#envok"/></svg>
<svg class="a" style="left:188px;top:231.10px" width="16" height="16"><use href="#display"/></svg>
<div class="t" style="left:226.00px;top:235.89px;font-size:11px;color:#fff;transform:scaleX(0.9400);">187643</div>
<div class="t" style="left:297.50px;top:235.89px;font-size:11px;color:#fff;transform:scaleX(0.8828);">TEST TEST TESTAvailable task : Task: Transl...</div>
<div class="t" style="left:522.20px;top:235.89px;font-size:11px;color:#fff;transform:scaleX(0.9600);">Barcelos Broductions</div>
<div class="t" style="left:657.50px;top:235.89px;font-size:11px;color:#fff;transform:scaleX(0.9614);">Barcelos Broductions M...</div>
<div class="t" style="left:792.90px;top:235.89px;font-size:11px;color:#fff;transform:scaleX(0.9600);">1</div>
<div class="t" style="left:864.30px;top:235.89px;font-size:11px;color:#fff;transform:scaleX(0.9600);">7</div>
<div class="t" style="left:936.70px;top:235.89px;font-size:11px;color:#fff;transform:scaleX(0.9783);">Demo orders</div>
<div class="t" style="left:1071.30px;top:235.89px;font-size:11px;color:#fff;transform:scaleX(0.9305);">Spanish</div>
<div class="t" style="left:1206.50px;top:235.89px;font-size:11px;color:#fff;transform:scaleX(0.9534);">Translation</div>
<div class="t" style="left:1341.30px;top:235.89px;font-size:11px;color:#fff;transform:scaleX(0.9345);">Renato Barcelos</div>
<div class="t" style="left:1476.40px;top:235.89px;font-size:11px;color:#fff;transform:scaleX(0.9475);">Spanish Translator</div>
<div class="t" style="left:1615.80px;top:235.89px;font-size:11px;color:#fff;transform:scaleX(0.9880);">04/09/2023 11:47</div>
<div class="t" style="left:1768.70px;top:235.89px;font-size:11px;color:#fff;transform:scaleX(0.9880);">04/09/2023 11:48</div>
<svg class="a" style="left:71px;top:264.29px" width="16" height="14"><use href="#envres"/></svg>
<svg class="a" style="left:130.2px;top:263.59px" width="16" height="14"><use href="#envok"/></svg>
<svg class="a" style="left:188px;top:261.99px" width="16" height="16"><use href="#display"/></svg>
<div class="t" style="left:226.00px;top:266.78px;font-size:11px;color:#fff;transform:scaleX(0.9400);">187643</div>
<div class="t" style="left:297.50px;top:266.78px;font-size:11px;color:#fff;transform:scaleX(0.8828);">TEST TEST TESTAvailable task : Task: Transl...</div>
<div class="t" style="left:522.20px;top:266.78px;font-size:11px;color:#fff;transform:scaleX(0.9600);">Barcelos Broductions</div>
<div class="t" style="left:657.50px;top:266.78px;font-size:11px;color:#fff;transform:scaleX(0.9614);">Barcelos Broductions M...</div>
<div class="t" style="left:792.90px;top:266.78px;font-size:11px;color:#fff;transform:scaleX(0.9600);">1</div>
<div class="t" style="left:864.30px;top:266.78px;font-size:11px;color:#fff;transform:scaleX(0.9600);">7</div>
<div class="t" style="left:936.70px;top:266.78px;font-size:11px;color:#fff;transform:scaleX(0.9783);">Demo orders</div>
<div class="t" style="left:1071.30px;top:266.78px;font-size:11px;color:#fff;transform:scaleX(0.9285);">French</div>
<div class="t" style="left:1206.50px;top:266.78px;font-size:11px;color:#fff;transform:scaleX(0.9534);">Translation</div>
<div class="t" style="left:1341.30px;top:266.78px;font-size:11px;color:#fff;transform:scaleX(0.9345);">Renato Barcelos</div>
<div class="t" style="left:1476.40px;top:266.78px;font-size:11px;color:#fff;transform:scaleX(0.9738);">Mr Translator</div>
<div class="t" style="left:1615.80px;top:266.78px;font-size:11px;color:#fff;transform:scaleX(0.9880);">04/09/2023 11:47</div>
<div class="t" style="left:1768.70px;top:266.78px;font-size:11px;color:#fff;transform:scaleX(0.9880);">04/09/2023 11:48</div>
<svg class="a" style="left:71px;top:295.18px" width="16" height="14"><use href="#envres"/></svg>
<svg class="a" style="left:130.2px;top:294.48px" width="16" height="14"><use href="#envok"/></svg>
<svg class="a" style="left:188px;top:292.88px" width="16" height="16"><use href="#display"/></svg>
<div class="t" style="left:226.00px;top:297.67px;font-size:11px;color:#fff;transform:scaleX(0.9400);">187643</div>
<div class="t" style="left:297.50px;top:297.67px;font-size:11px;color:#fff;transform:scaleX(0.8828);">TEST TEST TESTAvailable task : Task: Transl...</div>
<div class="t" style="left:522.20px;top:297.67px;font-size:11px;color:#fff;transform:scaleX(0.9600);">Barcelos Broductions</div>
<div class="t" style="left:657.50px;top:297.67px;font-size:11px;color:#fff;transform:scaleX(0.9614);">Barcelos Broductions M...</div>
<div class="t" style="left:792.90px;top:297.67px;font-size:11px;color:#fff;transform:scaleX(0.9600);">1</div>
<div class="t" style="left:864.30px;top:297.67px;font-size:11px;color:#fff;transform:scaleX(0.9600);">7</div>
<div class="t" style="left:936.70px;top:297.67px;font-size:11px;color:#fff;transform:scaleX(0.9783);">Demo orders</div>
<div class="t" style="left:1071.30px;top:297.67px;font-size:11px;color:#fff;transform:scaleX(0.9597);">Portuguese</div>
<div class="t" style="left:1206.50px;top:297.67px;font-size:11px;color:#fff;transform:scaleX(0.9534);">Translation</div>
<div class="t" style="left:1341.30px;top:297.67px;font-size:11px;color:#fff;transform:scaleX(0.9345);">Renato Barcelos</div>
<div class="t" style="left:1476.40px;top:297.67px;font-size:11px;color:#fff;transform:scaleX(0.9540);">Portuguese Translator 2</div>
<div class="t" style="left:1615.80px;top:297.67px;font-size:11px;color:#fff;transform:scaleX(0.9880);">04/09/2023 11:47</div>
<div class="t" style="left:1768.70px;top:297.67px;font-size:11px;color:#fff;transform:scaleX(0.9880);">04/09/2023 11:48</div>
<svg class="a" style="left:71px;top:326.07px" width="16" height="14"><use href="#envres"/></svg>
<svg class="a" style="left:130.2px;top:325.37px" width="16" height="14"><use href="#envok"/></svg>
<svg class="a" style="left:188px;top:323.77px" width="16" height="16"><use href="#display"/></svg>
<div class="t" style="left:226.00px;top:328.56px;font-size:11px;color:#fff;transform:scaleX(0.9400);">187729</div>
<div class="t" style="left:297.50px;top:328.56px;font-size:11px;color:#fff;transform:scaleX(0.9124);">TEST TEST TEST Toolkit inheritnce 7; Langu...</div>
<div class="t" style="left:522.20px;top:328.56px;font-size:11px;color:#fff;transform:scaleX(0.9780);">Maya Media Productions</div>
<div class="t" style="left:657.50px;top:328.56px;font-size:11px;color:#fff;transform:scaleX(0.9604);">Maya's consolidated ac...</div>
<div class="t" style="left:792.90px;top:328.56px;font-size:11px;color:#fff;transform:scaleX(0.9600);">0</div>
<div class="t" style="left:864.30px;top:328.56px;font-size:11px;color:#fff;transform:scaleX(0.9600);">0</div>
<div class="t" style="left:1341.30px;top:328.56px;font-size:11px;color:#fff;transform:scaleX(0.9663);">Maya</div>
<div class="t" style="left:1476.40px;top:328.56px;font-size:11px;color:#fff;transform:scaleX(0.9424);">Maya Spanish</div>
<div class="t" style="left:1615.80px;top:328.56px;font-size:11px;color:#fff;transform:scaleX(0.9880);">31/08/2023 19:39</div>
<div class="t" style="left:1768.70px;top:328.56px;font-size:11px;color:#fff;transform:scaleX(0.9880);">31/08/2023 19:40</div>
<svg class="a" style="left:71px;top:356.96px" width="16" height="14"><use href="#envres"/></svg>
<svg class="a" style="left:130.2px;top:356.26px" width="16" height="14"><use href="#envok"/></svg>
<svg class="a" style="left:188px;top:354.66px" width="16" height="16"><use href="#display"/></svg>
<div class="t" style="left:226.00px;top:359.45px;font-size:11px;color:#fff;transform:scaleX(0.9400);">187728</div>
<div class="t" style="left:297.50px;top:359.45px;font-size:11px;color:#fff;transform:scaleX(0.9124);">TEST TEST TEST Toolkit inheritnce 6; Langu...</div>
<div class="t" style="left:522.20px;top:359.45px;font-size:11px;color:#fff;transform:scaleX(0.9780);">Maya Media Productions</div>
<div class="t" style="left:657.50px;top:359.45px;font-size:11px;color:#fff;transform:scaleX(0.9604);">Maya's consolidated ac...</div>
<div class="t" style="left:792.90px;top:359.45px;font-size:11px;color:#fff;transform:scaleX(0.9600);">0</div>
<div class="t" style="left:864.30px;top:359.45px;font-size:11px;color:#fff;transform:scaleX(0.9600);">0</div>
<div class="t" style="left:1341.30px;top:359.45px;font-size:11px;color:#fff;transform:scaleX(0.9663);">Maya</div>
<div class="t" style="left:1476.40px;top:359.45px;font-size:11px;color:#fff;transform:scaleX(0.9424);">Maya Spanish</div>
<div class="t" style="left:1615.80px;top:359.45px;font-size:11px;color:#fff;transform:scaleX(0.9880);">31/08/2023 19:22</div>
<div class="t" style="left:1768.70px;top:359.45px;font-size:11px;color:#fff;transform:scaleX(0.9880);">31/08/2023 19:23</div>
<svg class="a" style="left:71px;top:387.85px" width="16" height="14"><use href="#envres"/></svg>
<svg class="a" style="left:130.2px;top:387.15px" width="16" height="14"><use href="#envok"/></svg>
<svg class="a" style="left:188px;top:385.55px" width="16" height="16"><use href="#display"/></svg>
<div class="t" style="left:226.00px;top:390.34px;font-size:11px;color:#fff;transform:scaleX(0.9600);">0</div>
<div class="t" style="left:297.50px;top:390.34px;font-size:11px;color:#fff;transform:scaleX(0.9600);">OOONA v36.7 - OOONA Manager- Passw...</div>
<div class="t" style="left:792.90px;top:390.34px;font-size:11px;color:#fff;transform:scaleX(0.9600);">0</div>
<div class="t" style="left:864.30px;top:390.34px;font-size:11px;color:#fff;transform:scaleX(0.9600);">0</div>
<div class="t" style="left:1476.40px;top:390.34px;font-size:11px;color:#fff;transform:scaleX(0.9528);">Adam Tal</div>
<div class="t" style="left:1615.80px;top:390.34px;font-size:11px;color:#fff;transform:scaleX(0.9880);">31/08/2023 15:15</div>
<div class="t" style="left:1768.70px;top:390.34px;font-size:11px;color:#fff;transform:scaleX(0.9880);">31/08/2023 15:15</div>
<svg class="a" style="left:71px;top:418.74px" width="16" height="14"><use href="#envres"/></svg>
<svg class="a" style="left:130.2px;top:418.04px" width="16" height="14"><use href="#envok"/></svg>
<svg class="a" style="left:188px;top:416.44px" width="16" height="16"><use href="#display"/></svg>
<div class="t" style="left:226.00px;top:421.23px;font-size:11px;color:#fff;transform:scaleX(0.9400);">187724</div>
<div class="t" style="left:297.50px;top:421.23px;font-size:11px;color:#fff;transform:scaleX(0.8828);">TEST TEST TESTAvailable task : Task: Transl...</div>
<div class="t" style="left:522.20px;top:421.23px;font-size:11px;color:#fff;transform:scaleX(0.9600);">Barcelos Broductions</div>
<div class="t" style="left:657.50px;top:421.23px;font-size:11px;color:#fff;transform:scaleX(0.9614);">Barcelos Broductions M...</div>
<div class="t" style="left:792.90px;top:421.23px;font-size:11px;color:#fff;transform:scaleX(0.9600);">0</div>
<div class="t" style="left:864.30px;top:421.23px;font-size:11px;color:#fff;transform:scaleX(0.9600);">0</div>
<div class="t" style="left:1071.30px;top:421.23px;font-size:11px;color:#fff;transform:scaleX(0.9597);">Portuguese</div>
<div class="t" style="left:1206.50px;top:421.23px;font-size:11px;color:#fff;transform:scaleX(0.9534);">Translation</div>
<div class="t" style="left:1341.30px;top:421.23px;font-size:11px;color:#fff;transform:scaleX(0.9345);">Renato Barcelos</div>
<div class="t" style="left:1476.40px;top:421.23px;font-size:11px;color:#fff;transform:scaleX(0.9686);">Senhor Tradutor</div>
<div class="t" style="left:1615.80px;top:421.23px;font-size:11px;color:#fff;transform:scaleX(0.9880);">31/08/2023 13:49</div>
<div class="t" style="left:1768.70px;top:421.23px;font-size:11px;color:#fff;transform:scaleX(0.9880);">31/08/2023 13:50</div>
<svg class="a" style="left:71px;top:449.63px" width="16" height="14"><use href="#envres"/></svg>
<svg class="a" style="left:130.2px;top:448.93px" width="16" height="14"><use href="#envok"/></svg>
<svg class="a" style="left:188px;top:447.33px" width="16" height="16"><use href="#display"/></svg>
<div class="t" style="left:226.00px;top:452.12px;font-size:11px;color:#fff;transform:scaleX(0.9400);">187722</div>
<div class="t" style="left:297.50px;top:452.12px;font-size:11px;color:#fff;transform:scaleX(0.8847);">TEST TEST TESTAvailable task : Task: Messa...</div>
<div class="t" style="left:522.20px;top:452.12px;font-size:11px;color:#fff;transform:scaleX(0.9600);">Barcelos Broductions</div>
<div class="t" style="left:657.50px;top:452.12px;font-size:11px;color:#fff;transform:scaleX(0.9614);">Barcelos Broductions M...</div>
<div class="t" style="left:792.90px;top:452.12px;font-size:11px;color:#fff;transform:scaleX(0.9600);">0</div>
<div class="t" style="left:864.30px;top:452.12px;font-size:11px;color:#fff;transform:scaleX(0.9600);">10</div>
<div class="t" style="left:936.70px;top:452.12px;font-size:11px;color:#fff;transform:scaleX(0.9174);">Messages</div>
<div class="t" style="left:1071.30px;top:452.12px;font-size:11px;color:#fff;transform:scaleX(0.9597);">Portuguese</div>
<div class="t" style="left:1206.50px;top:452.12px;font-size:11px;color:#fff;transform:scaleX(0.9474);">Message check for &quot;Enf...</div>
<div class="t" style="left:1341.30px;top:452.12px;font-size:11px;color:#fff;transform:scaleX(0.9686);">Senhor Tradutor</div>
<div class="t" style="left:1476.40px;top:452.12px;font-size:11px;color:#fff;transform:scaleX(0.9686);">Senhor Tradutor</div>
<div class="t" style="left:1615.80px;top:452.12px;font-size:11px;color:#fff;transform:scaleX(0.9880);">31/08/2023 13:44</div>
<div class="t" style="left:1768.70px;top:452.12px;font-size:11px;color:#fff;transform:scaleX(0.9880);">31/08/2023 13:44</div>
<svg class="a" style="left:71px;top:480.52px" width="16" height="14"><use href="#envres"/></svg>
<svg class="a" style="left:130.2px;top:479.82px" width="16" height="14"><use href="#envok"/></svg>
<svg class="a" style="left:188px;top:478.22px" width="16" height="16"><use href="#display"/></svg>
<div class="t" style="left:226.00px;top:483.01px;font-size:11px;color:#fff;transform:scaleX(0.9400);">187715</div>
<div class="t" style="left:297.50px;top:483.01px;font-size:11px;color:#fff;transform:scaleX(0.8847);">TEST TEST TESTAvailable task : Task: Messa...</div>
<div class="t" style="left:522.20px;top:483.01px;font-size:11px;color:#fff;transform:scaleX(0.9600);">Barcelos Broductions</div>
<div class="t" style="left:657.50px;top:483.01px;font-size:11px;color:#fff;transform:scaleX(0.9614);">Barcelos Broductions M...</div>
<div class="t" style="left:792.90px;top:483.01px;font-size:11px;color:#fff;transform:scaleX(0.9600);">0</div>
<div class="t" style="left:864.30px;top:483.01px;font-size:11px;color:#fff;transform:scaleX(0.9600);">9</div>
<div class="t" style="left:936.70px;top:483.01px;font-size:11px;color:#fff;transform:scaleX(0.9174);">Messages</div>
<div class="t" style="left:1071.30px;top:483.01px;font-size:11px;color:#fff;transform:scaleX(0.9597);">Portuguese</div>
<div class="t" style="left:1206.50px;top:483.01px;font-size:11px;color:#fff;transform:scaleX(0.9474);">Message check for &quot;Enf...</div>
<div class="t" style="left:1341.30px;top:483.01px;font-size:11px;color:#fff;transform:scaleX(0.9686);">Senhor Tradutor</div>
<div class="t" style="left:1476.40px;top:483.01px;font-size:11px;color:#fff;transform:scaleX(0.9686);">Senhor Tradutor</div>
<div class="t" style="left:1615.80px;top:483.01px;font-size:11px;color:#fff;transform:scaleX(0.9880);">31/08/2023 13:40</div>
<div class="t" style="left:1768.70px;top:483.01px;font-size:11px;color:#fff;transform:scaleX(0.9880);">31/08/2023 13:41</div>
<svg class="a" style="left:71px;top:511.41px" width="16" height="14"><use href="#envres"/></svg>
<svg class="a" style="left:130.2px;top:510.71px" width="16" height="14"><use href="#envok"/></svg>
<svg class="a" style="left:188px;top:509.11px" width="16" height="16"><use href="#display"/></svg>
<div class="t" style="left:226.00px;top:513.90px;font-size:11px;color:#fff;transform:scaleX(0.9600);">0</div>
<div class="t" style="left:297.50px;top:513.90px;font-size:11px;color:#fff;transform:scaleX(0.9709);">Resource report reminder</div>
<div class="t" style="left:792.90px;top:513.90px;font-size:11px;color:#fff;transform:scaleX(0.9600);">0</div>
<div class="t" style="left:864.30px;top:513.90px;font-size:11px;color:#fff;transform:scaleX(0.9600);">0</div>
<div class="t" style="left:1341.30px;top:513.90px;font-size:11px;color:#fff;transform:scaleX(0.9345);">Renato Barcelos</div>
<div class="t" style="left:1476.40px;top:513.90px;font-size:11px;color:#fff;transform:scaleX(0.9686);">Senhor Tradutor</div>
<div class="t" style="left:1615.80px;top:513.90px;font-size:11px;color:#fff;transform:scaleX(0.9880);">30/08/2023 19:15</div>
<div class="t" style="left:1768.70px;top:513.90px;font-size:11px;color:#fff;transform:scaleX(0.9880);">30/08/2023 19:16</div>
<svg class="a" style="left:71px;top:542.30px" width="16" height="14"><use href="#envres"/></svg>
<svg class="a" style="left:130.2px;top:541.60px" width="16" height="14"><use href="#envok"/></svg>
<svg class="a" style="left:188px;top:540.00px" width="16" height="16"><use href="#display"/></svg>
<div class="t" style="left:226.00px;top:544.79px;font-size:11px;color:#fff;transform:scaleX(0.9400);">187714</div>
<div class="t" style="left:297.50px;top:544.79px;font-size:11px;color:#fff;transform:scaleX(0.8977);">TEST TEST TEST Reported units check; Lan...</div>
<div class="t" style="left:522.20px;top:544.79px;font-size:11px;color:#fff;transform:scaleX(0.9600);">Barcelos Broductions</div>
<div class="t" style="left:657.50px;top:544.79px;font-size:11px;color:#fff;transform:scaleX(0.9614);">Barcelos Broductions M...</div>
<div class="t" style="left:792.90px;top:544.79px;font-size:11px;color:#fff;transform:scaleX(0.9600);">0</div>
<div class="t" style="left:864.30px;top:544.79px;font-size:11px;color:#fff;transform:scaleX(0.9600);">0</div>
<div class="t" style="left:1341.30px;top:544.79px;font-size:11px;color:#fff;transform:scaleX(0.9345);">Renato Barcelos</div>
<div class="t" style="left:1476.40px;top:544.79px;font-size:11px;color:#fff;transform:scaleX(0.9966);">Delayed distribution</div>
<div class="t" style="left:1615.80px;top:544.79px;font-size:11px;color:#fff;transform:scaleX(0.9880);">30/08/2023 18:34</div>
<div class="t" style="left:1768.70px;top:544.79px;font-size:11px;color:#fff;transform:scaleX(0.9880);">30/08/2023 18:35</div>
<svg class="a" style="left:71px;top:573.19px" width="16" height="14"><use href="#envres"/></svg>
<svg class="a" style="left:130.2px;top:572.49px" width="16" height="14"><use href="#envok"/></svg>
<svg class="a" style="left:188px;top:570.89px" width="16" height="16"><use href="#display"/></svg>
<div class="t" style="left:226.00px;top:575.68px;font-size:11px;color:#fff;transform:scaleX(0.9400);">187667</div>
<div class="t" style="left:297.50px;top:575.68px;font-size:11px;color:#fff;transform:scaleX(0.9499);">Maya; added a Resource request</div>
<div class="t" style="left:522.20px;top:575.68px;font-size:11px;color:#fff;transform:scaleX(0.9600);">Barcelos Broductions</div>
<div class="t" style="left:657.50px;top:575.68px;font-size:11px;color:#fff;transform:scaleX(0.9614);">Barcelos Broductions M...</div>
<div class="t" style="left:792.90px;top:575.68px;font-size:11px;color:#fff;transform:scaleX(0.9600);">0</div>
<div class="t" style="left:864.30px;top:575.68px;font-size:11px;color:#fff;transform:scaleX(0.9600);">0</div>
<div class="t" style="left:1071.30px;top:575.68px;font-size:11px;color:#fff;transform:scaleX(0.9597);">Portuguese</div>
<div class="t" style="left:1206.50px;top:575.68px;font-size:11px;color:#fff;transform:scaleX(0.9534);">Translation</div>
<div class="t" style="left:1341.30px;top:575.68px;font-size:11px;color:#fff;transform:scaleX(0.9663);">Maya</div>
<div class="t" style="left:1476.40px;top:575.68px;font-size:11px;color:#fff;transform:scaleX(0.9345);">Renato Barcelos</div>
<div class="t" style="left:1615.80px;top:575.68px;font-size:11px;color:#fff;transform:scaleX(0.9880);">30/08/2023 17:48</div>
<div class="t" style="left:1768.70px;top:575.68px;font-size:11px;color:#fff;transform:scaleX(0.9880);">30/08/2023 17:48</div>
<svg class="a" style="left:71px;top:604.08px" width="16" height="14"><use href="#envres"/></svg>
<svg class="a" style="left:130.2px;top:603.38px" width="16" height="14"><use href="#envok"/></svg>
<svg class="a" style="left:188px;top:601.78px" width="16" height="16"><use href="#display"/></svg>
<div class="t" style="left:226.00px;top:606.57px;font-size:11px;color:#fff;transform:scaleX(0.9400);">187667</div>
<div class="t" style="left:297.50px;top:606.57px;font-size:11px;color:#fff;transform:scaleX(0.9499);">Maya; added a Resource request</div>
<div class="t" style="left:522.20px;top:606.57px;font-size:11px;color:#fff;transform:scaleX(0.9600);">Barcelos Broductions</div>
<div class="t" style="left:657.50px;top:606.57px;font-size:11px;color:#fff;transform:scaleX(0.9614);">Barcelos Broductions M...</div>
<div class="t" style="left:792.90px;top:606.57px;font-size:11px;color:#fff;transform:scaleX(0.9600);">0</div>
<div class="t" style="left:864.30px;top:606.57px;font-size:11px;color:#fff;transform:scaleX(0.9600);">0</div>
<div class="t" style="left:1071.30px;top:606.57px;font-size:11px;color:#fff;transform:scaleX(0.9597);">Portuguese</div>
<div class="t" style="left:1206.50px;top:606.57px;font-size:11px;color:#fff;transform:scaleX(0.9534);">Translation</div>
<div class="t" style="left:1341.30px;top:606.57px;font-size:11px;color:#fff;transform:scaleX(0.9663);">Maya</div>
<div class="t" style="left:1476.40px;top:606.57px;font-size:11px;color:#fff;transform:scaleX(0.9500);">Wayne 3 Garb 2</div>
<div class="t" style="left:1615.80px;top:606.57px;font-size:11px;color:#fff;transform:scaleX(0.9880);">30/08/2023 17:48</div>
<div class="t" style="left:1768.70px;top:606.57px;font-size:11px;color:#fff;transform:scaleX(0.9880);">30/08/2023 17:48</div>
<svg class="a" style="left:71px;top:634.97px" width="16" height="14"><use href="#envres"/></svg>
<svg class="a" style="left:130.2px;top:634.27px" width="16" height="14"><use href="#envok"/></svg>
<svg class="a" style="left:188px;top:632.67px" width="16" height="16"><use href="#display"/></svg>
<div class="t" style="left:226.00px;top:637.46px;font-size:11px;color:#fff;transform:scaleX(0.9400);">187712</div>
<div class="t" style="left:297.50px;top:637.46px;font-size:11px;color:#fff;transform:scaleX(0.9090);">TEST TEST TEST Delayed distribution 3; Epi...</div>
<div class="t" style="left:522.20px;top:637.46px;font-size:11px;color:#fff;transform:scaleX(0.9600);">Barcelos Broductions</div>
<div class="t" style="left:657.50px;top:637.46px;font-size:11px;color:#fff;transform:scaleX(0.9614);">Barcelos Broductions M...</div>
<div class="t" style="left:792.90px;top:637.46px;font-size:11px;color:#fff;transform:scaleX(0.9600);">0</div>
<div class="t" style="left:864.30px;top:637.46px;font-size:11px;color:#fff;transform:scaleX(0.9600);">13</div>
<div class="t" style="left:936.70px;top:637.46px;font-size:11px;color:#fff;transform:scaleX(0.9966);">Delayed distribution</div>
<div class="t" style="left:1341.30px;top:637.46px;font-size:11px;color:#fff;transform:scaleX(0.9345);">Renato Barcelos</div>
<div class="t" style="left:1476.40px;top:637.46px;font-size:11px;color:#fff;transform:scaleX(0.9966);">Delayed distribution</div>
<div class="t" style="left:1615.80px;top:637.46px;font-size:11px;color:#fff;transform:scaleX(0.9880);">30/08/2023 12:19</div>
<div class="t" style="left:1768.70px;top:637.46px;font-size:11px;color:#fff;transform:scaleX(0.9880);">30/08/2023 12:20</div>
<svg class="a" style="left:71px;top:665.86px" width="16" height="14"><use href="#envres"/></svg>
<svg class="a" style="left:130.2px;top:665.16px" width="16" height="14"><use href="#envok"/></svg>
<svg class="a" style="left:188px;top:663.56px" width="16" height="16"><use href="#display"/></svg>
<div class="t" style="left:226.00px;top:666.55px;font-size:11px;color:#fff;transform:scaleX(0.9400);">187708</div>
<div class="t" style="left:297.50px;top:668.35px;font-size:11px;color:#fff;transform:scaleX(0.9193);">TEST TEST TEST Delayed distribution 1 - ai...</div>
<div class="t" style="left:522.20px;top:668.35px;font-size:11px;color:#fff;transform:scaleX(0.9600);">Barcelos Broductions</div>
<div class="t" style="left:657.50px;top:668.35px;font-size:11px;color:#fff;transform:scaleX(0.9614);">Barcelos Broductions M...</div>
<div class="t" style="left:792.90px;top:668.35px;font-size:11px;color:#fff;transform:scaleX(0.9600);">0</div>
<div class="t" style="left:864.30px;top:668.35px;font-size:11px;color:#fff;transform:scaleX(0.9600);">12</div>
<div class="t" style="left:936.70px;top:668.35px;font-size:11px;color:#fff;transform:scaleX(0.9966);">Delayed distribution</div>
<div class="t" style="left:1341.30px;top:668.35px;font-size:11px;color:#fff;transform:scaleX(0.9345);">Renato Barcelos</div>
<div class="t" style="left:1476.40px;top:668.35px;font-size:11px;color:#fff;transform:scaleX(0.9966);">Delayed distribution</div>
<div class="t" style="left:1615.80px;top:668.35px;font-size:11px;color:#fff;transform:scaleX(0.9880);">30/08/2023 11:57</div>
<div class="t" style="left:1768.70px;top:668.35px;font-size:11px;color:#fff;transform:scaleX(0.9880);">30/08/2023 11:59</div>
<svg class="a" style="left:264.5px;top:662.76px" width="17" height="17"><use href="#delay"/></svg>
<svg class="a" style="left:71px;top:696.75px" width="16" height="14"><use href="#envres"/></svg>
<svg class="a" style="left:130.2px;top:696.05px" width="16" height="14"><use href="#envok"/></svg>
<svg class="a" style="left:188px;top:694.45px" width="16" height="16"><use href="#display"/></svg>
<div class="t" style="left:226.00px;top:697.44px;font-size:11px;color:#fff;transform:scaleX(0.9400);">187708</div>
<div class="t" style="left:297.50px;top:699.24px;font-size:11px;color:#fff;transform:scaleX(0.9193);">TEST TEST TEST Delayed distribution 1 - ai...</div>
<div class="t" style="left:522.20px;top:699.24px;font-size:11px;color:#fff;transform:scaleX(0.9600);">Barcelos Broductions</div>
<div class="t" style="left:657.50px;top:699.24px;font-size:11px;color:#fff;transform:scaleX(0.9614);">Barcelos Broductions M...</div>
<div class="t" style="left:792.90px;top:699.24px;font-size:11px;color:#fff;transform:scaleX(0.9600);">0</div>
<div class="t" style="left:864.30px;top:699.24px;font-size:11px;color:#fff;transform:scaleX(0.9600);">12</div>
<div class="t" style="left:936.70px;top:699.24px;font-size:11px;color:#fff;transform:scaleX(0.9966);">Delayed distribution</div>
<div class="t" style="left:1341.30px;top:699.24px;font-size:11px;color:#fff;transform:scaleX(0.9345);">Renato Barcelos</div>
<div class="t" style="left:1476.40px;top:699.24px;font-size:11px;color:#fff;transform:scaleX(0.9966);">Delayed distribution</div>
<div class="t" style="left:1615.80px;top:699.24px;font-size:11px;color:#fff;transform:scaleX(0.9880);">30/08/2023 11:45</div>
<div class="t" style="left:1768.70px;top:699.24px;font-size:11px;color:#fff;transform:scaleX(0.9880);">30/08/2023 11:47</div>
<svg class="a" style="left:264.5px;top:693.65px" width="17" height="17"><use href="#delay"/></svg>
<svg class="a" style="left:71px;top:727.64px" width="16" height="14"><use href="#envres"/></svg>
<svg class="a" style="left:130.2px;top:726.94px" width="16" height="14"><use href="#envok"/></svg>
<svg class="a" style="left:188px;top:725.34px" width="16" height="16"><use href="#display"/></svg>
<div class="t" style="left:226.00px;top:728.33px;font-size:11px;color:#fff;transform:scaleX(0.9400);">187708</div>
<div class="t" style="left:297.50px;top:730.13px;font-size:11px;color:#fff;transform:scaleX(0.9193);">TEST TEST TEST Delayed distribution 1 - ai...</div>
<div class="t" style="left:522.20px;top:730.13px;font-size:11px;color:#fff;transform:scaleX(0.9600);">Barcelos Broductions</div>
<div class="t" style="left:657.50px;top:730.13px;font-size:11px;color:#fff;transform:scaleX(0.9614);">Barcelos Broductions M...</div>
<div class="t" style="left:792.90px;top:730.13px;font-size:11px;color:#fff;transform:scaleX(0.9600);">0</div>
<div class="t" style="left:864.30px;top:730.13px;font-size:11px;color:#fff;transform:scaleX(0.9600);">12</div>
<div class="t" style="left:936.70px;top:730.13px;font-size:11px;color:#fff;transform:scaleX(0.9966);">Delayed distribution</div>
<div class="t" style="left:1341.30px;top:730.13px;font-size:11px;color:#fff;transform:scaleX(0.9345);">Renato Barcelos</div>
<div class="t" style="left:1476.40px;top:730.13px;font-size:11px;color:#fff;transform:scaleX(0.9966);">Delayed distribution</div>
<div class="t" style="left:1615.80px;top:730.13px;font-size:11px;color:#fff;transform:scaleX(0.9880);">30/08/2023 11:33</div>
<div class="t" style="left:1768.70px;top:730.13px;font-size:11px;color:#fff;transform:scaleX(0.9880);">30/08/2023 11:36</div>
<svg class="a" style="left:264.5px;top:724.54px" width="17" height="17"><use href="#delay"/></svg>
<svg class="a" style="left:71px;top:758.53px" width="16" height="14"><use href="#envres"/></svg>
<svg class="a" style="left:130.2px;top:757.83px" width="16" height="14"><use href="#envok"/></svg>
<svg class="a" style="left:188px;top:756.23px" width="16" height="16"><use href="#display"/></svg>
<div class="t" style="left:226.00px;top:759.22px;font-size:11px;color:#fff;transform:scaleX(0.9400);">187708</div>
<div class="t" style="left:297.50px;top:761.02px;font-size:11px;color:#fff;transform:scaleX(0.9239);">TEST TEST TEST Delayed distribution 1 - or...</div>
<div class="t" style="left:522.20px;top:761.02px;font-size:11px;color:#fff;transform:scaleX(0.9600);">Barcelos Broductions</div>
<div class="t" style="left:657.50px;top:761.02px;font-size:11px;color:#fff;transform:scaleX(0.9614);">Barcelos Broductions M...</div>
<div class="t" style="left:792.90px;top:761.02px;font-size:11px;color:#fff;transform:scaleX(0.9600);">0</div>
<div class="t" style="left:864.30px;top:761.02px;font-size:11px;color:#fff;transform:scaleX(0.9600);">12</div>
<div class="t" style="left:936.70px;top:761.02px;font-size:11px;color:#fff;transform:scaleX(0.9966);">Delayed distribution</div>
<div class="t" style="left:1341.30px;top:761.02px;font-size:11px;color:#fff;transform:scaleX(0.9345);">Renato Barcelos</div>
<div class="t" style="left:1476.40px;top:761.02px;font-size:11px;color:#fff;transform:scaleX(0.9966);">Delayed distribution</div>
<div class="t" style="left:1615.80px;top:761.02px;font-size:11px;color:#fff;transform:scaleX(0.9880);">30/08/2023 11:25</div>
<div class="t" style="left:1768.70px;top:761.02px;font-size:11px;color:#fff;transform:scaleX(0.9880);">30/08/2023 11:27</div>
<svg class="a" style="left:262.5px;top:751.43px" width="22" height="22"><use href="#delay"/></svg>
<svg class="a" style="left:71px;top:789.42px" width="16" height="14"><use href="#envres"/></svg>
<svg class="a" style="left:130.2px;top:788.72px" width="16" height="14"><use href="#envok"/></svg>
<svg class="a" style="left:188px;top:787.12px" width="16" height="16"><use href="#display"/></svg>
<div class="t" style="left:226.00px;top:791.91px;font-size:11px;color:#fff;transform:scaleX(0.9600);">0</div>
<div class="t" style="left:297.50px;top:791.91px;font-size:11px;color:#fff;transform:scaleX(1.0781);">Email error</div>
<div class="t" style="left:792.90px;top:791.91px;font-size:11px;color:#fff;transform:scaleX(0.9600);">0</div>
<div class="t" style="left:864.30px;top:791.91px;font-size:11px;color:#fff;transform:scaleX(0.9600);">0</div>
<div class="t" style="left:1476.40px;top:791.91px;font-size:11px;color:#fff;transform:scaleX(0.9644);">Alex Yoffe</div>
<div class="t" style="left:1615.80px;top:791.91px;font-size:11px;color:#fff;transform:scaleX(0.9880);">29/08/2023 14:13</div>
<div class="t" style="left:1768.70px;top:791.91px;font-size:11px;color:#fff;transform:scaleX(0.9880);">29/08/2023 14:14</div>
<svg class="a" style="left:71px;top:820.31px" width="16" height="14"><use href="#envres"/></svg>
<svg class="a" style="left:130.2px;top:819.61px" width="16" height="14"><use href="#envok"/></svg>
<svg class="a" style="left:188px;top:818.01px" width="16" height="16"><use href="#display"/></svg>
<div class="t" style="left:226.00px;top:821.00px;font-size:11px;color:#fff;transform:scaleX(0.9400);">187672</div>
<div class="t" style="left:297.50px;top:822.80px;font-size:11px;color:#fff;transform:scaleX(0.8968);">TEST TEST TEST A Day Delayed; Languages...</div>
<div class="t" style="left:522.20px;top:822.80px;font-size:11px;color:#fff;transform:scaleX(0.9600);">Barcelos Broductions</div>
<div class="t" style="left:657.50px;top:822.80px;font-size:11px;color:#fff;transform:scaleX(0.9614);">Barcelos Broductions M...</div>
<div class="t" style="left:792.90px;top:822.80px;font-size:11px;color:#fff;transform:scaleX(0.9600);">0</div>
<div class="t" style="left:864.30px;top:822.80px;font-size:11px;color:#fff;transform:scaleX(0.9600);">0</div>
<div class="t" style="left:1341.30px;top:822.80px;font-size:11px;color:#fff;transform:scaleX(0.9345);">Renato Barcelos</div>
<div class="t" style="left:1476.40px;top:822.80px;font-size:11px;color:#fff;transform:scaleX(0.8731);">Sara</div>
<div class="t" style="left:1615.80px;top:822.80px;font-size:11px;color:#fff;transform:scaleX(0.9880);">29/08/2023 11:24</div>
<div class="t" style="left:1768.70px;top:822.80px;font-size:11px;color:#fff;transform:scaleX(0.9880);">29/08/2023 11:25</div>
<svg class="a" style="left:264.5px;top:817.21px" width="17" height="17"><use href="#delay"/></svg>
</div></div>
<div class="a" style="left:1892px;top:232.5px;width:17.7px;height:611px;background:#f0f0f0"></div>
<div class="a" style="left:1894px;top:257px;width:13.7px;height:569.5px;background:#c1c1c1"></div>
<svg class="a" style="left:1896px;top:238px" width="10" height="8" viewBox="0 0 10 8"><path d="M0.8 6.5h8.4L5 2z" fill="#505050"/></svg>
<svg class="a" style="left:1896px;top:831px" width="10" height="8" viewBox="0 0 10 8"><path d="M0.8 1.5h8.4L5 6z" fill="#a3a3a3"/></svg>
<div class="a" style="left:10px;top:843.5px;width:1882px;height:17.5px;background:#f0f0f0"></div>
<div class="a" style="left:28px;top:846px;width:1485px;height:13px;background:#c1c1c1"></div>
<svg class="a" style="left:14px;top:847.5px" width="8" height="10" viewBox="0 0 8 10"><path d="M6.5 0.8v8.4L2 5z" fill="#a3a3a3"/></svg>
<svg class="a" style="left:1881px;top:847.5px" width="8" height="10" viewBox="0 0 8 10"><path d="M1.5 0.8v8.4L6 5z" fill="#505050"/></svg>
<div class="a" style="left:1892px;top:843.5px;width:17.7px;height:17.5px;background:#dcdcdc"></div>

<div class="a" style="left:10px;top:861px;width:1899.7px;height:29px;background:linear-gradient(#3a3838 0%,#3d3b3b 42%,#343232 47%,#2d2b2b 80%,#2a2828 100%)"></div>
<div class="a" style="left:10px;top:890px;width:1899.7px;height:32.5px;background:linear-gradient(#363434 0%,#3a3838 42%,#312f2f 50%,#2b2929 85%,#292727 100%)"></div>

<div class="t" style="left:35.90px;top:869.89px;font-size:11px;color:#fff;transform:scaleX(0.9717);">New range</div>
<div class="t" style="left:111.80px;top:869.89px;font-size:11px;color:#fff;transform:scaleX(0.9565);">Change range</div>
<div class="t" style="left:202.60px;top:869.89px;font-size:11px;color:#fff;transform:scaleX(0.9568);">Clear range</div>
<div class="t" style="left:282.00px;top:869.89px;font-size:11px;color:#fff;transform:scaleX(0.9447);">Preset range</div>
<div class="t" style="left:366.00px;top:869.89px;font-size:11px;color:#fff;transform:scaleX(0.9774);">Grid layout</div>
<div class="t" style="left:443.00px;top:869.89px;font-size:11px;color:#fff;transform:scaleX(0.9479);">Cancel all visible emails</div>
<div class="t" style="left:578.70px;top:869.89px;font-size:11px;color:#fff;transform:scaleX(0.9406);">Resend all visible emails</div>
<svg class="a" style="left:16.7px;top:865px" width="16" height="15"><use href="#tfun"/><circle cx="11.3" cy="10.8" r="2.9" fill="#86b24e"/><circle cx="11.3" cy="10.8" r="1.2" fill="#a8cc78"/></svg>
<svg class="a" style="left:92.5px;top:865px" width="16" height="15"><use href="#tfun"/><path d="M8.2 13.2l5.8-5.8" stroke="#e8963a" stroke-width="2.4"/><path d="M13 8.3l1.2-1.2" stroke="#aaa" stroke-width="2.4"/></svg>
<svg class="a" style="left:183.5px;top:865px" width="16" height="15"><use href="#tfun"/><path d="M9.5 9l4 4M13.5 9l-4 4" stroke="#d03030" stroke-width="1.5"/></svg>
<svg class="a" style="left:263.5px;top:865px" width="16" height="15"><use href="#tfun"/><circle cx="11.3" cy="10.8" r="2.7" fill="#666" stroke="#9a9a9a" stroke-width="1"/></svg>
<svg class="a" style="left:346.5px;top:864.5px" width="15" height="15" viewBox="0 0 15 15"><circle cx="7.5" cy="7.5" r="5.6" fill="none" stroke="#8a8a8a" stroke-width="2.6" stroke-dasharray="2.2 1.4"/><circle cx="7.5" cy="7.5" r="4.3" fill="none" stroke="#8a8a8a" stroke-width="1.8"/></svg>
<svg class="a" style="left:423.5px;top:864.5px" width="15" height="15" viewBox="0 0 15 15"><path d="M5 3.6A4.9 4.9 0 1 1 5.8 13.2" fill="none" stroke="#3a74d0" stroke-width="2.3"/><path d="M0.3 4.2L6.2 0.3 6.6 7.6z" fill="#3a74d0"/></svg>
<svg class="a" style="left:559.5px;top:864px" width="16" height="14" viewBox="0 0 16 14"><path d="M0.5 3.5l5-3 9 3v6l-5 3.5L0.5 9.5z" fill="#e4e4e4"/><path d="M5.5 6.5l9-3v6l-5 3.5z" fill="#bdbdbd"/><path d="M0.5 3.5l9 3v6.5" fill="none" stroke="#999" stroke-width="0.6"/><rect x="10.5" y="8.5" width="4" height="4" fill="#6fca2e"/></svg>
<div class="a" style="left:15.3px;top:895px;width:22px;height:22px;border-radius:50%;background:#2a2828"></div>
<svg class="a" style="left:20.3px;top:900px" width="12" height="12" viewBox="0 0 12 12"><path d="M3 2.5v7" stroke="#8e8e8e" stroke-width="1.8"/><path d="M9.5 2.3L4.2 6l5.3 3.7z" fill="#8e8e8e"/></svg>
<div class="a" style="left:41.0px;top:895px;width:22px;height:22px;border-radius:50%;background:#2a2828"></div>
<svg class="a" style="left:46.0px;top:900px" width="12" height="12" viewBox="0 0 12 12"><path d="M8.8 2.3L3.5 6l5.3 3.7z" fill="#8e8e8e"/></svg>
<div class="a" style="left:319.7px;top:895px;width:22px;height:22px;border-radius:50%;background:#2a2828"></div>
<svg class="a" style="left:324.7px;top:900px" width="12" height="12" viewBox="0 0 12 12"><path d="M3.4 2.3L8.7 6 3.4 9.7z" fill="#fff"/></svg>
<div class="a" style="left:345.2px;top:895px;width:22px;height:22px;border-radius:50%;background:#2a2828"></div>
<svg class="a" style="left:350.2px;top:900px" width="12" height="12" viewBox="0 0 12 12"><path d="M9.2 2.5v7" stroke="#fff" stroke-width="1.8"/><path d="M2.5 2.3L7.8 6 2.5 9.7z" fill="#fff"/></svg>
<div class="a" style="left:65px;top:894.5px;width:24px;height:24px;border-radius:50%;background:linear-gradient(#3b74d3,#2f66c6)"></div>
<div class="t" style="left:74.00px;top:901.69px;font-size:11px;color:#fff;transform:scaleX(0.9600);">1</div>
<div class="t" style="left:98.50px;top:901.69px;font-size:11px;color:#fff;transform:scaleX(0.9600);">2</div>
<div class="t" style="left:123.50px;top:901.69px;font-size:11px;color:#fff;transform:scaleX(0.9600);">3</div>
<div class="t" style="left:148.50px;top:901.69px;font-size:11px;color:#fff;transform:scaleX(0.9600);">4</div>
<div class="t" style="left:173.50px;top:901.69px;font-size:11px;color:#fff;transform:scaleX(0.9600);">5</div>
<div class="t" style="left:197.50px;top:901.69px;font-size:11px;color:#fff;transform:scaleX(0.8722);">...</div>
<div class="t" style="left:224.00px;top:901.69px;font-size:11px;color:#fff;transform:scaleX(0.9143);">Page</div>
<div class="a" style="left:253px;top:896px;width:31px;height:21px;border-radius:3px;background:#fff"></div>
<div class="t" style="left:260.50px;top:901.69px;font-size:11px;color:#222;transform:scaleX(0.9600);">1</div>
<div class="t" style="left:290.00px;top:901.69px;font-size:11px;color:#fff;transform:scaleX(1.0077);">of 6</div>
<div class="a" style="left:380px;top:895.8px;width:52.5px;height:21px;border-radius:3px;background:linear-gradient(#3c3c3c,#2e2e2e);box-shadow:0 0 0 1px #262626"></div>
<div class="a" style="left:380px;top:895.8px;width:31px;height:21px;border-radius:3px 0 0 3px;background:#fff"></div>
<div class="t" style="left:386.50px;top:901.69px;font-size:11px;color:#222;transform:scaleX(0.9600);">20</div>
<svg class="a" style="left:416.5px;top:901.5px" width="10" height="10"><use href="#pdrop"/></svg>
<div class="t" style="left:439.00px;top:901.69px;font-size:11px;color:#fff;transform:scaleX(0.9757);">items per page</div>
<div class="t" style="left:1734.00px;top:901.89px;font-size:11px;color:#fff;transform:scaleX(1.0058);">1 - 20 of 111 items</div>
<div class="a" style="left:1835.8px;top:895px;width:21px;height:21px;border-radius:50%;background:#2a2828"></div>
<svg class="a" style="left:1838.2px;top:898px" width="16" height="16" viewBox="0 0 16 16"><path d="M8 1.5v13" stroke="#fff" stroke-width="1.7"/><path d="M1 8h5M10 8h5" stroke="#fff" stroke-width="1.3"/><path d="M0.6 8l3.4-3v6zM15.4 8L12 5v6z" fill="#fff"/></svg>
<div class="a" style="left:1859.5px;top:895px;width:21px;height:21px;border-radius:50%;background:#2a2828"></div>
<svg class="a" style="left:1862.0px;top:898px" width="16" height="16" viewBox="0 0 16 16"><path d="M1.5 2.5L6 8v6.5h2V8" fill="#fff" stroke="#fff" stroke-width="1.2" stroke-linejoin="round"/><path d="M1.5 2.5h3L8 7" fill="#fff"/><path d="M5 2.2l8.5 8.5" stroke="#fff" stroke-width="1.7"/><path d="M9 2.5h4L10.5 5.5z" fill="#fff"/></svg>
<div class="a" style="left:1883.0px;top:895px;width:21px;height:21px;border-radius:50%;background:#2a2828"></div>
<svg class="a" style="left:1885.5px;top:898px" width="16" height="16" viewBox="0 0 16 16"><path d="M12.6 6.5A5.2 5.2 0 1 1 8 3.6" fill="none" stroke="#fff" stroke-width="2"/><path d="M8 0.6l4.2 3-4.2 3z" fill="#fff"/></svg>
<div class="a" style="left:180px;top:742px;width:165.3px;height:75.6px;border:5px solid #1d9a2a"></div>
<div class="a" style="left:193.2px;top:786.4px;width:142.8px;height:23px;border-radius:4px;background:#2a2929"></div>
<svg class="a" style="left:256px;top:781px" width="14" height="6" viewBox="0 0 14 6"><path d="M0 6L7 0l7 6z" fill="#2a2929"/></svg>

<div class="t" style="left:201.60px;top:792.69px;font-size:11px;color:#fff;transform:scaleX(0.9797);">Was a delayed distribution</div>
<svg class="a" style="left:262.4px;top:762.3px" width="17" height="23" viewBox="0 0 17 23"><path d="M5 2C5 0.4 8 0.4 8 2V7.5C8.2 6 10.5 6 10.7 7.5V8.2C10.9 6.8 13.2 6.8 13.4 8.2V9C13.6 7.7 16 7.7 16 9.2V16C16 19.5 14.5 22.5 11.5 22.5H8C6.5 22.5 5.5 21.5 4.6 20L0.8 14.5C0.1 13.4 1.4 12.3 2.5 13.2L5 15.5Z" fill="#fff" stroke="#0d0d20" stroke-width="1.1" stroke-linejoin="round"/><path d="M8 8v4M10.7 8.5v3.5M13.4 9v3" stroke="#0d0d20" stroke-width="0.9"/></svg>
<div class="t" style="left:849.40px;top:951.96px;font-size:9.5px;color:#fff;font-weight:bold;transform:scaleX(0.8765);">Copyright &copy; 2012 <span style="color:#7a7a7a;font-style:italic">O</span><span style="color:#e8b84a;font-style:italic">O</span><span style="color:#5bbbe2">O</span><span style="color:#8a8a8a">NA.NET</span> ltd. All rights reserved.</div>
<div class="a" style="left:1876.3px;top:948px;width:41.5px;height:13px;border-radius:5px;background:#861a0e"></div>
<div class="t" style="left:1878.50px;top:951.30px;font-size:8.5px;color:#fff;transform:scaleX(0.9122);">Zoom:89%</div>
</body></html>
